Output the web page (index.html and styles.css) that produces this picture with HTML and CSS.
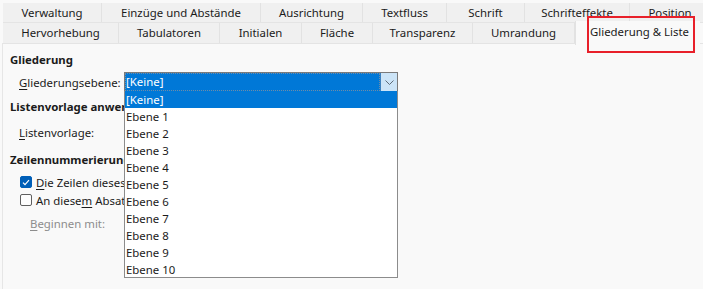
FILE: index.html
```html
<!DOCTYPE html>
<html lang="de">
<head>
<meta charset="utf-8">
<link rel="stylesheet" href="styles.css">
</head>
<body>
<div class="dialog">
  <div class="tabs">
    <div class="tabrow">
      <div class="tab w-verw">Verwaltung</div>
      <div class="tab w-einz">Einzüge und Abstände</div>
      <div class="tab w-ausr">Ausrichtung</div>
      <div class="tab w-text">Textfluss</div>
      <div class="tab w-schr">Schrift</div>
      <div class="tab w-sfx">Schrifteffekte</div>
      <div class="tab w-pos">Position</div>
    </div>
    <div class="tabrow">
      <div class="tab w-herv">Hervorhebung</div>
      <div class="tab w-tabu">Tabulatoren</div>
      <div class="tab w-init">Initialen</div>
      <div class="tab w-flae">Fläche</div>
      <div class="tab w-trans">Transparenz</div>
      <div class="tab w-umr">Umrandung</div>
      <div class="tab tab-active">Gliederung &amp; Liste</div>
    </div>
  </div>
  <div class="panel">
    <div class="heading h-first">Gliederung</div>
    <div class="row row-combo">
      <span class="label"><u>G</u>liederungsebene:</span>
      <div class="combo combo-focus">
        <span class="combo-value">[Keine]</span>
        <span class="combo-btn">
          <svg width="9" height="5" viewBox="0 0 9 5"><path d="M0.5 0.5 L4.5 4.5 L8.5 0.5" fill="none" stroke="#5d6b78" stroke-width="1"/></svg>
        </span>
      </div>
    </div>
    <div class="heading h-list">Listenvorlage anwenden</div>
    <div class="row row-combo2">
      <span class="label"><u>L</u>istenvorlage:</span>
    </div>
    <div class="heading h-zeil">Zeilennummerierung</div>
    <div class="check-row cr-first">
      <span class="box box-checked">
        <svg width="8" height="7" viewBox="0 0 8 7"><path d="M1 3.6 L3 5.6 L7 1.2" fill="none" stroke="#fff" stroke-width="1.2"/></svg>
      </span>
      <span><u>D</u>ie Zeilen dieses Absatzes mitzählen</span>
    </div>
    <div class="check-row">
      <span class="box"></span>
      <span>An diese<u>m</u> Absatz neu beginnen</span>
    </div>
    <div class="row-begin"><u>B</u>eginnen mit:</div>
  </div>

  <ul class="dropdown">
    <li class="sel">[Keine]</li>
    <li>Ebene 1</li>
    <li>Ebene 2</li>
    <li>Ebene 3</li>
    <li>Ebene 4</li>
    <li>Ebene 5</li>
    <li>Ebene 6</li>
    <li>Ebene 7</li>
    <li>Ebene 8</li>
    <li>Ebene 9</li>
    <li>Ebene 10</li>
  </ul>
  <div class="annotation"></div>
</div>
</body>
</html>
```

FILE: styles.css
```css
* { box-sizing: border-box; }
html, body {
  margin: 0;
  padding: 0;
  background: #f9f9f9;
}
body {
  font-family: "Noto Sans", "Open Sans", sans-serif;
  font-size: 11.4px;
  color: #1b1b1b;
  width: 703px;
  height: 289px;
  overflow: hidden;
}
u { text-decoration: underline; text-underline-offset: 2px; }

.dialog {
  position: relative;
  width: 703px;
  height: 289px;
  padding-top: 3px;
}

.tabs { display: flex; flex-direction: column; padding-left: 3px; }
.tabrow { display: flex; height: 19px; }
.tabrow + .tabrow { height: 21px; border-top: 1px solid #e4e4e4; }
.tab {
  flex: none;
  display: flex;
  align-items: center;
  justify-content: center;
  background: #f0f0f0;
  border-right: 1px solid #e2e2e2;
  white-space: nowrap;
  line-height: 1;
}
.w-verw { width: 99px; }
.w-einz { width: 159px; }
.w-ausr { width: 102px; }
.w-text { width: 84px; }
.w-schr { width: 78px; }
.w-sfx { width: 105px; }
.w-pos { width: 80px; border-right: none; }
.w-herv { width: 116px; }
.w-tabu { width: 101px; }
.w-init { width: 82px; }
.w-flae { width: 71px; }
.w-trans { width: 100px; }
.w-umr { width: 102px; }
.tab-active {
  width: 125px;
  background: #f9f9f9;
  margin-top: -2px;
  height: 24px;
  padding-bottom: 2px;
  padding-left: 3px;
  border-right: none;
  border-left: 1px solid #e2e2e2;
  position: relative;
  z-index: 1;
}

.panel {
  margin-left: 2px;
  border-left: 1px solid #e6e6e6;
  border-top: 1px solid #e4e4e4;
  height: 246px;
  padding-left: 7px;
  display: flex;
  flex-direction: column;
}
.heading { font-weight: bold; height: 17px; line-height: 17px; white-space: nowrap; }
.h-first { margin-top: 7px; }
.h-list { margin-top: 6px; }
.h-zeil { margin-top: 9px; }

.row { display: flex; align-items: center; padding-left: 9px; white-space: nowrap; }
.row-combo { margin-top: 4px; height: 20px; }
.row-combo2 { margin-top: 7px; height: 20px; }
.label { width: 105px; flex: none; }

.combo {
  width: 274px;
  height: 20px;
  display: flex;
  background: #0078d7;
  border: 1px solid #7a7a7a;
}
.combo-value {
  flex: 1;
  color: #fff;
  padding-left: 1px;
  line-height: 17px;
  outline: 1px dotted #6e8ca8;
  outline-offset: -1px;
}
.combo-btn {
  width: 17px;
  flex: none;
  background: #cce4f7;
  border-left: 1px solid #3d82c0;
  display: flex;
  align-items: center;
  justify-content: center;
}

.check-row {
  display: flex;
  align-items: center;
  gap: 4px;
  height: 18px;
  padding-left: 10px;
  white-space: nowrap;
}
.cr-first { margin-top: 5px; }
.box {
  width: 12px;
  height: 12px;
  border: 1px solid #5f5f5f;
  border-radius: 2px;
  background: #fdfdfd;
  display: flex;
  align-items: center;
  justify-content: center;
  flex: none;
}
.box-checked { background: #005fb8; border-color: #005fb8; }
.row-begin {
  margin-top: 6px;
  padding-left: 20px;
  height: 18px;
  line-height: 18px;
  color: #8d8d8d;
}

.dropdown {
  position: absolute;
  left: 124px;
  top: 91px;
  width: 274px;
  height: 187px;
  margin: 0;
  padding: 0;
  list-style: none;
  background: #fff;
  border: 1px solid #8c8c8c;
  border-top: none;
  z-index: 5;
}
.dropdown li {
  height: 17px;
  line-height: 17px;
  padding-left: 1px;
  color: #1b1b1b;
}
.dropdown li.sel { background: #0078d7; color: #fff; }

.annotation {
  position: absolute;
  left: 587px;
  top: 16px;
  width: 108px;
  height: 37px;
  border: 2px solid #e8202a;
  z-index: 10;
}
```
